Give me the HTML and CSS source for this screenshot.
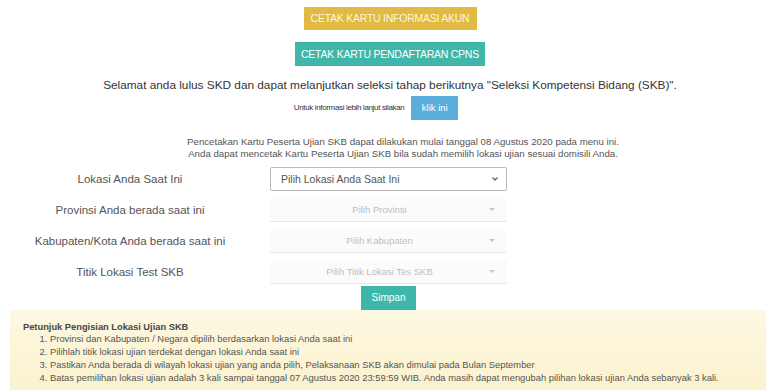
FILE: index.html
```html
<!DOCTYPE html>
<html>
    <head>
        <meta charset="utf-8">
        <meta name="viewport" content="width=device-width, initial-scale=1.0">
        <title>Lokasi Ujian SKB</title>

        <link rel="stylesheet" href="styles.css">
    </head>
    <body>
        <div class="page">
            <div class="actions">
                <button type="button" class="btn btn--gold">CETAK KARTU INFORMASI AKUN</button>
                <button type="button" class="btn btn--teal">CETAK KARTU PENDAFTARAN CPNS</button>
            </div>

            <h3 class="title">Selamat anda lulus SKD dan dapat melanjutkan seleksi tahap berikutnya "Seleksi Kompetensi Bidang (SKB)".</h3>
            <p class="info">Untuk informasi lebih lanjut silakan <a class="btn btn--blue">klik ini</a></p>

            <p class="note">
                Pencetakan Kartu Peserta Ujian SKB dapat dilakukan mulai tanggal 08 Agustus 2020 pada menu ini.<br>
                Anda dapat mencetak Kartu Peserta Ujian SKB bila sudah memilih lokasi ujian sesuai domisili Anda.
            </p>

            <form class="lokasi">
                <label class="lokasi__label">Lokasi Anda Saat Ini</label>
                <div class="select">
                    <span>Pilih Lokasi Anda Saat Ini</span>
                    <svg width="8" height="6" viewBox="0 0 8 6"><path d="M1.5 1.5 L4 4 L6.5 1.5" fill="none" stroke="#666" stroke-width="1.3"/></svg>
                </div>

                <label class="lokasi__label">Provinsi Anda berada saat ini</label>
                <div class="select select--disabled">
                    <span>Pilih Provinsi</span>
                    <i class="caret"></i>
                </div>

                <label class="lokasi__label">Kabupaten/Kota Anda berada saat ini</label>
                <div class="select select--disabled">
                    <span>Pilih Kabupaten</span>
                    <i class="caret"></i>
                </div>

                <label class="lokasi__label">Titik Lokasi Test SKB</label>
                <div class="select select--disabled">
                    <span>Pilih Titik Lokasi Tes SKB</span>
                    <i class="caret"></i>
                </div>

                <div></div>
                <div class="lokasi__submit">
                    <button type="button" class="btn btn--teal btn--small">Simpan</button>
                </div>
            </form>

            <div class="petunjuk">
                <strong>Petunjuk Pengisian Lokasi Ujian SKB</strong>
                <ol>
                    <li>Provinsi dan Kabupaten / Negara dipilih berdasarkan lokasi Anda saat ini</li>
                    <li>Pilihlah titik lokasi ujian terdekat dengan lokasi Anda saat ini</li>
                    <li>Pastikan Anda berada di wilayah lokasi ujian yang anda pilih, Pelaksanaan SKB akan dimulai pada Bulan September</li>
                    <li>Batas pemilihan lokasi ujian adalah 3 kali sampai tanggal 07 Agustus 2020 23:59:59 WIB. Anda masih dapat mengubah pilihan lokasi ujian Anda sebanyak 3 kali.</li>
                </ol>
            </div>
        </div>
    </body>
</html>
```

FILE: styles.css
```css
:root {
    --gold: rgb(224, 186, 66);
    --teal: rgb(62, 183, 170);
    --blue: rgb(91, 173, 220);
    --text: rgb(51, 51, 51);
    --muted: rgb(85, 85, 85);
}

body {
    margin: 0;
    background-color: #fff;
    color: var(--text);
    font-family: "Liberation Sans", Arial, sans-serif;
    overflow: hidden;
}

.page {
    width: 780px;
    height: 390px;
    overflow: hidden;
}

.actions {
    display: flex;
    flex-direction: column;
    align-items: center;
    gap: 12px;
    padding-top: 7px;
}

.btn {
    border: none;
    color: #fff;
    font-family: "Liberation Sans", Arial, sans-serif;
    font-size: 10.5px;
    letter-spacing: -0.25px;
    padding: 0;
    height: 24px;
    line-height: 24px;
    text-align: center;
    white-space: nowrap;
    cursor: pointer;
    display: inline-block;
}

.btn--gold {
    background-color: var(--gold);
    color: rgb(253, 246, 222);
    width: 173px;
    height: 23px;
    line-height: 23px;
}

.btn--teal {
    background-color: var(--teal);
    width: 190px;
}

.btn--blue {
    background-color: var(--blue);
    width: 47px;
    font-size: 9.5px;
    letter-spacing: 0;
    vertical-align: middle;
    margin-left: 5px;
}

.btn--small {
    width: 55px;
    font-size: 10px;
    letter-spacing: 0;
}

.title {
    margin: 12px 0 0;
    text-align: center;
    font-size: 11.8px;
    font-weight: normal;
    color: var(--text);
}

.info {
    margin: 4px 0 0;
    padding-right: 28px;
    text-align: center;
    font-size: 8px;
    letter-spacing: -0.35px;
    color: var(--text);
}

.note {
    margin: 16px 0 0;
    padding-left: 26px;
    text-align: center;
    font-size: 9.7px;
    line-height: 12px;
    color: var(--muted);
}

.lokasi {
    display: grid;
    grid-template-columns: 200px 237px;
    column-gap: 40px;
    row-gap: 7px;
    padding-left: 30px;
    margin-top: 7px;
}

.lokasi__label {
    text-align: center;
    font-size: 11.5px;
    color: var(--muted);
    height: 24px;
    line-height: 24px;
    white-space: nowrap;
}

.select {
    height: 24px;
    box-sizing: border-box;
    border: 1px solid rgb(185, 185, 185);
    border-radius: 2px;
    display: flex;
    align-items: center;
    justify-content: space-between;
    padding: 0 7px 0 10px;
    font-size: 10.5px;
    color: var(--muted);
}

.select--disabled {
    border: none;
    border-bottom: 1px solid rgb(232, 232, 232);
    background-color: rgb(251, 251, 251);
    border-radius: 0;
    color: rgb(190, 190, 190);
    font-size: 9.5px;
    padding: 0 12px 0 0;
}

.select--disabled span {
    flex: 1;
    text-align: center;
}

.caret {
    width: 0;
    height: 0;
    border-left: 3px solid transparent;
    border-right: 3px solid transparent;
    border-top: 3px solid rgb(200, 200, 200);
}

.lokasi__submit {
    display: flex;
    justify-content: center;
    margin-top: -5px;
}

.petunjuk {
    margin: 0 14px 0 10px;
    padding: 10px 13px 14px;
    background: linear-gradient(to bottom, rgb(253, 248, 226), rgb(251, 241, 204));
    font-size: 9.4px;
    color: var(--muted);
}

.petunjuk strong {
    display: block;
    font-size: 9.3px;
    margin-top: 2px;
    color: rgb(70, 70, 70);
}

.petunjuk ol {
    margin: 0;
    padding-left: 27px;
}

.petunjuk li {
    line-height: 13px;
}
```
